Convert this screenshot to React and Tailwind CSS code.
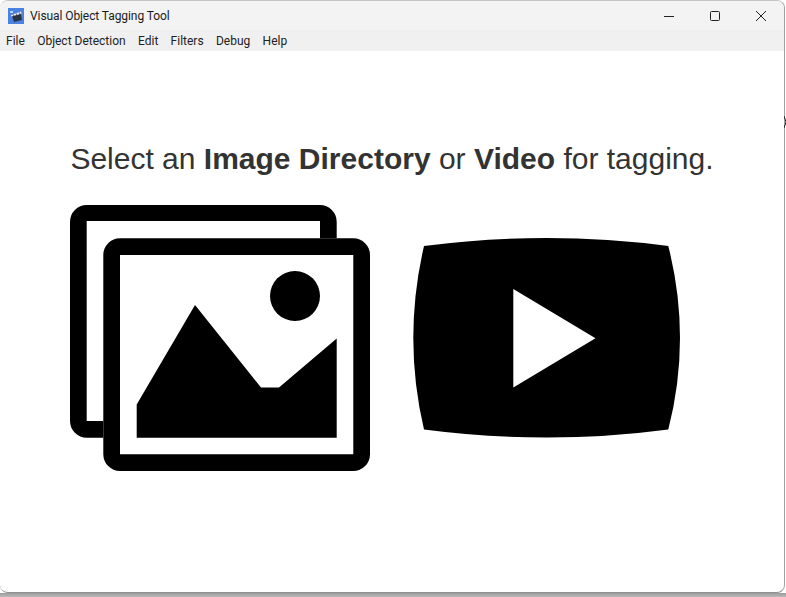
import React from 'react'

const menus = ['File', 'Object Detection', 'Edit', 'Filters', 'Debug', 'Help']

const AppIcon = () => (
  <svg width="16" height="16" viewBox="0 0 16 16">
    <rect width="16" height="16" fill="#4a82e2" />
    <rect x="2" y="3" width="3" height="2" fill="#b4cff6" />
    <path d="M4 8 L13 6 L14 12 L6 14 Z" fill="#2a3444" />
    <path d="M3 7 L13 3.5 L13.6 5.5 L3.6 8.6 Z" fill="#f2f4f8" />
    <path d="M5 6.4 L6 7.8 M8 5.4 L9 6.8 M11 4.4 L12 5.8" stroke="#2a3444" strokeWidth="1" />
  </svg>
)

const ImagesIcon = () => (
  <svg width="300" height="266" viewBox="70 205 300 266" className="shrink-0">
    <path d="M86.7 205 H320 A16.7 16.7 0 0 1 336.7 221.7 V238.3 H320 V221 H86.7 V421 H103.3 V437.7 H86.7 A16.7 16.7 0 0 1 70 421 V221.7 A16.7 16.7 0 0 1 86.7 205 Z" />
    <path
      fillRule="evenodd"
      d="M120 238.3 H353.3 A16.7 16.7 0 0 1 370 255 V454.3 A16.7 16.7 0 0 1 353.3 471 H120 A16.7 16.7 0 0 1 103.3 454.3 V255 A16.7 16.7 0 0 1 120 238.3 Z M120 255 V454.3 H353.3 V255 Z"
    />
    <circle cx="295" cy="296" r="25" />
    <path d="M136.7 404.5 L195 305 L261 387.5 H279 L336.7 338.5 V437.7 H136.7 Z" />
  </svg>
)

const VideoIcon = () => (
  <svg width="267" height="200" viewBox="413 238 267 200" className="shrink-0 mt-[33px]">
    <path
      fillRule="evenodd"
      d="M424 246 Q485 238 546.7 238 Q608 238 668.3 246 Q680 292 680 338 Q680 384 668.3 429.5 Q608 437.5 546.7 437.5 Q485 437.5 424 429.5 Q413.3 384 413.3 338 Q413.3 292 424 246 Z M513.3 289 V387.5 L595.5 338.3 Z"
    />
  </svg>
)

const App = () => {
  return (
    <div className="relative w-[786px] h-[597px] overflow-hidden bg-white font-['Liberation_Sans',sans-serif]">
      <div className="flex flex-col w-[785px] h-[593px] bg-white rounded-lg border-r border-b border-t border-r-[#a0a0a0] border-b-[#8e8e8e] border-t-[#c4c4c4] overflow-hidden">
        <div className="flex items-center h-[29px] shrink-0 bg-[#f3f3f3]">
          <div className="ml-[8px]">
            <AppIcon />
          </div>
          <span className="ml-[6px] text-[12px] tracking-[-0.08px] text-[#1a1a1a] font-['Roboto',sans-serif]">Visual Object Tagging Tool</span>
          <div className="ml-auto flex items-center">
            <svg width="46" height="29" viewBox="0 0 46 29">
              <path d="M18 15.5 H28" stroke="#222" strokeWidth="1" />
            </svg>
            <svg width="46" height="29" viewBox="0 0 46 29">
              <rect x="18.5" y="10.5" width="9" height="9" rx="1" fill="none" stroke="#222" strokeWidth="1" />
            </svg>
            <svg width="46" height="29" viewBox="0 0 46 29">
              <path d="M18 10 L28 20 M28 10 L18 20" stroke="#222" strokeWidth="1" />
            </svg>
          </div>
        </div>
        <div className="flex items-center h-[21px] shrink-0 bg-[#f0f0f0] pl-[6px] gap-[12.3px] text-[12px] text-[#222] font-['Roboto',sans-serif]">
          {menus.map(m => (
            <span key={m}>{m}</span>
          ))}
        </div>
        <div className="flex-1 flex flex-col pl-[70px]">
          <h1 className="mt-[88px] h-[40px] pl-[0.4px] text-[30px] leading-[40px] text-[#333] whitespace-nowrap">
            Select an <b>Image Directory</b> or <b>Video</b> for tagging.
          </h1>
          <div className="mt-[26px] flex items-start gap-[43px]">
            <ImagesIcon />
            <VideoIcon />
          </div>
        </div>
      </div>
      <div className="absolute left-0 right-0 bottom-0 h-[4px] bg-gradient-to-b from-[#9c9c9c] to-[#b8b8b8]" />
      <svg className="absolute left-[784px] top-[114px]" width="2" height="16" viewBox="0 0 2 16">
        <path d="M0 2 L2 8 L0 14" fill="none" stroke="#222" strokeWidth="1" />
      </svg>
    </div>
  )
}
export default App
